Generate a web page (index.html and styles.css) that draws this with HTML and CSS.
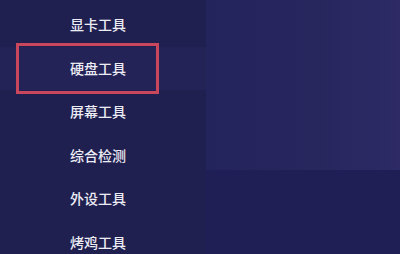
FILE: index.html
```html
<!DOCTYPE html>
<html>
<head>
<meta charset="utf-8">
<link rel="stylesheet" href="styles.css">
</head>
<body>
<div class="app">
  <nav class="sidebar">
    <div class="item">显卡工具</div>
    <div class="item active"><span class="frame"></span>硬盘工具</div>
    <div class="item">屏幕工具</div>
    <div class="item">综合检测</div>
    <div class="item">外设工具</div>
    <div class="item">烤鸡工具</div>
  </nav>
  <main class="main">
    <div class="panel-top"></div>
    <div class="panel-bottom"></div>
  </main>
</div>
</body>
</html>
```
FILE: styles.css
```css
html, body {
  margin: 0;
  padding: 0;
  width: 400px;
  height: 254px;
  overflow: hidden;
  background: #1f1f52;
}
.app {
  display: flex;
  width: 400px;
  height: 254px;
  overflow: hidden;
}
.sidebar {
  width: 206px;
  flex: none;
  background: #1f1f50;
  padding-top: 3px;
  box-sizing: border-box;
  overflow: hidden;
}
.item {
  position: relative;
  height: 43.6px;
  line-height: 43.6px;
  padding-left: 70px;
  font-family: "Noto Sans CJK SC", sans-serif;
  font-size: 14px;
  font-weight: 500;
  color: #ececf4;
}
.item.active {
  background: #232358;
}
.frame {
  position: absolute;
  left: 16px;
  top: -4px;
  width: 143px;
  height: 51px;
  box-sizing: border-box;
  border: 3px solid #c9475c;
}
.main {
  flex: 1;
  display: flex;
  flex-direction: column;
}
.panel-top {
  height: 170px;
  background: linear-gradient(90deg, #24245c 0%, #27275e 60%, #2d2a65 100%);
}
.panel-bottom {
  flex: 1;
  background: #1f1f55;
}
```
